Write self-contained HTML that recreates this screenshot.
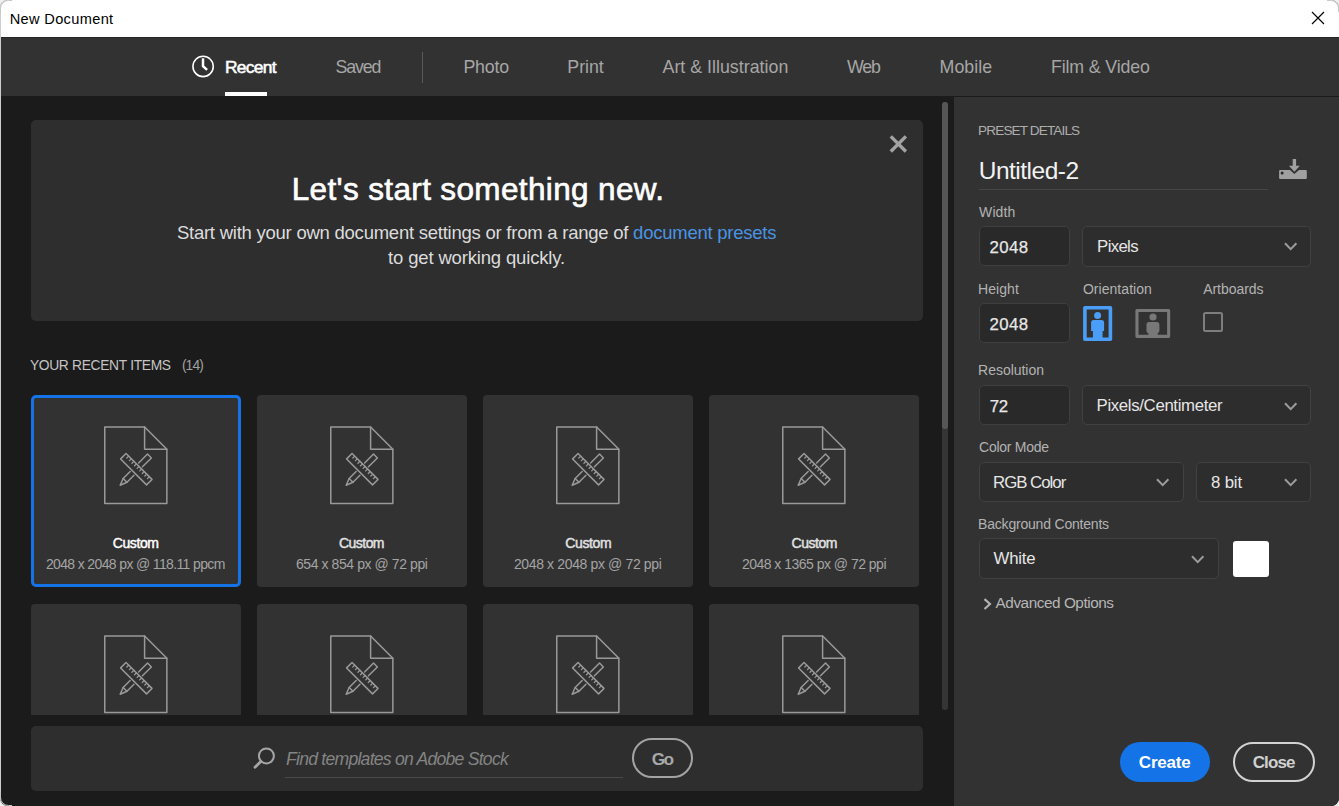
<!DOCTYPE html>
<html lang="en">
<head>
<meta charset="utf-8">
<title>New Document</title>
<style>
*{box-sizing:border-box;margin:0;padding:0}
html,body{width:1339px;height:806px;overflow:hidden;background:#f0f0f0;font-family:"Liberation Sans",sans-serif}
.a{position:absolute}
.tx{position:absolute;white-space:nowrap}
#win{position:absolute;left:0;top:0;width:1339px;height:806px;border-radius:8px;overflow:hidden;background:#1b1b1b}
#title{position:absolute;left:0;top:0;width:1339px;height:37px;background:#fff}
#tabs{position:absolute;left:0;top:37px;width:1339px;height:59px;background:#323232}
#rightbg{position:absolute;left:954px;top:97px;width:385px;height:709px;background:#323232}
#clip{position:absolute;left:0;top:97px;width:940px;height:618px;overflow:hidden}
.card{position:absolute;width:210px;height:192px;background:#323232;border-radius:4px}
.card.sel{border:3px solid #1473e6;border-radius:5px}
.ic{position:absolute;left:73px;top:31px}
.sel .ic{left:70px;top:28px}
.inp{position:absolute;background:#292929;border:1px solid #3f3f3f;border-radius:5px}
.dd{position:absolute;background:#2d2d2d;border:1px solid #414141;border-radius:5px}
#ttl{left:9.70px;top:10px;font-size:14.6px;line-height:18px;letter-spacing:0.336px;color:#000;}
#t_recent{left:224.97px;top:56px;font-size:17.4px;line-height:22px;letter-spacing:-0.704px;color:#fff;-webkit-text-stroke:0.55px #fff;}
#t_saved{left:335.40px;top:56px;font-size:17.8px;line-height:22px;letter-spacing:-1.082px;color:#a6a6a6;}
#t_photo{left:463.40px;top:56px;font-size:17.8px;line-height:22px;letter-spacing:-0.170px;color:#a6a6a6;}
#t_print{left:567.30px;top:56px;font-size:17.8px;line-height:22px;letter-spacing:-0.030px;color:#a6a6a6;}
#t_art{left:662.50px;top:56px;font-size:17.8px;line-height:22px;letter-spacing:0.017px;color:#a6a6a6;}
#t_web{left:847.10px;top:56px;font-size:17.8px;line-height:22px;letter-spacing:-1.275px;color:#a6a6a6;}
#t_mobile{left:939.60px;top:56px;font-size:17.8px;line-height:22px;letter-spacing:0.022px;color:#a6a6a6;}
#t_film{left:1050.90px;top:56px;font-size:17.8px;line-height:22px;letter-spacing:-0.126px;color:#a6a6a6;}
#h1{left:291.72px;top:170px;font-size:31.5px;line-height:38px;letter-spacing:0.360px;color:#fff;-webkit-text-stroke:0.65px #fff;}
#sub1{left:176.90px;top:221px;font-size:18.5px;line-height:23px;letter-spacing:-0.241px;color:#dcdcdc;}
#sub2{left:388.10px;top:246px;font-size:18.5px;line-height:23px;letter-spacing:-0.163px;color:#dcdcdc;}
#rec{left:29.90px;top:357px;font-size:13.8px;line-height:17px;letter-spacing:-0.313px;color:#c4c4c4;}
#rec14{left:181.90px;top:357px;font-size:13.8px;line-height:17px;letter-spacing:-0.880px;color:#a0a0a0;}
#c1n{left:112.72px;top:534px;font-size:14px;line-height:18px;letter-spacing:-0.404px;color:#fff;-webkit-text-stroke:0.45px #fff;}
#c1d{left:45.90px;top:555px;font-size:14px;line-height:18px;letter-spacing:-0.635px;color:#a4a4a4;}
#c2n{left:339.03px;top:534px;font-size:14px;line-height:18px;letter-spacing:-0.544px;color:#e2e2e2;-webkit-text-stroke:0.45px #e2e2e2;}
#c2d{left:295.90px;top:555px;font-size:14px;line-height:18px;letter-spacing:-0.415px;color:#a4a4a4;}
#c3n{left:565.33px;top:534px;font-size:14px;line-height:18px;letter-spacing:-0.384px;color:#e2e2e2;-webkit-text-stroke:0.45px #e2e2e2;}
#c3d{left:513.90px;top:555px;font-size:14px;line-height:18px;letter-spacing:-0.362px;color:#a4a4a4;}
#c4n{left:791.52px;top:534px;font-size:14px;line-height:18px;letter-spacing:-0.464px;color:#e2e2e2;-webkit-text-stroke:0.45px #e2e2e2;}
#c4d{left:741.90px;top:555px;font-size:14px;line-height:18px;letter-spacing:-0.512px;color:#a4a4a4;}
#ph{left:286.00px;top:748px;font-size:17.6px;line-height:22px;letter-spacing:-0.754px;color:#848484;font-style:italic;}
#go{left:651.80px;top:748px;font-size:17.3px;line-height:22px;letter-spacing:-1.642px;color:#a8a8a8;font-weight:bold;}
#pd{left:978.10px;top:122px;font-size:13.6px;line-height:17px;letter-spacing:-0.888px;color:#adadad;}
#unt{left:978.70px;top:156px;font-size:24.5px;line-height:29px;letter-spacing:-0.492px;color:#f2f2f2;}
#l_w{left:979.10px;top:203px;font-size:14px;line-height:18px;letter-spacing:0.075px;color:#b2b2b2;}
#v_w{left:989.42px;top:237px;font-size:16.8px;line-height:21px;letter-spacing:0.417px;color:#e8e8e8;-webkit-text-stroke:0.25px #e8e8e8;}
#d_px{left:1097.10px;top:236px;font-size:16.8px;line-height:21px;letter-spacing:-0.655px;color:#e6e6e6;}
#l_h{left:978.10px;top:280px;font-size:14px;line-height:18px;letter-spacing:0.044px;color:#b2b2b2;}
#l_o{left:1082.90px;top:280px;font-size:14px;line-height:18px;letter-spacing:0.050px;color:#b2b2b2;}
#l_a{left:1203.20px;top:280px;font-size:14px;line-height:18px;letter-spacing:-0.050px;color:#b2b2b2;}
#v_h{left:989.42px;top:314px;font-size:16.8px;line-height:21px;letter-spacing:0.417px;color:#e8e8e8;-webkit-text-stroke:0.25px #e8e8e8;}
#l_r{left:978.10px;top:361px;font-size:14px;line-height:18px;letter-spacing:-0.029px;color:#b2b2b2;}
#v_r{left:989.73px;top:396px;font-size:16.8px;line-height:21px;letter-spacing:-0.283px;color:#e8e8e8;-webkit-text-stroke:0.25px #e8e8e8;}
#d_pc{left:1096.60px;top:395px;font-size:16.8px;line-height:21px;letter-spacing:-0.344px;color:#e6e6e6;}
#l_c{left:979.10px;top:438px;font-size:14px;line-height:18px;letter-spacing:-0.275px;color:#b2b2b2;}
#d_rgb{left:993.00px;top:472px;font-size:16.8px;line-height:21px;letter-spacing:-0.980px;color:#e6e6e6;}
#d_8{left:1211.00px;top:472px;font-size:16.8px;line-height:21px;letter-spacing:-0.164px;color:#e6e6e6;}
#l_b{left:978.10px;top:515px;font-size:14px;line-height:18px;letter-spacing:-0.202px;color:#b2b2b2;}
#d_wh{left:993.50px;top:548px;font-size:16.8px;line-height:21px;letter-spacing:-0.191px;color:#e6e6e6;}
#adv{left:995.60px;top:593px;font-size:15.3px;line-height:19px;letter-spacing:-0.444px;color:#b6b6b6;}
#create{left:1138.80px;top:752px;font-size:17px;line-height:21px;letter-spacing:-0.193px;color:#fff;font-weight:bold;}
#close{left:1252.70px;top:752px;font-size:17px;line-height:21px;letter-spacing:-0.860px;color:#d0d0d0;font-weight:bold;}
</style>
</head>
<body>
<svg width="0" height="0" style="position:absolute">
<defs>
<g id="docic" fill="none" stroke="#999" stroke-width="1.5" stroke-linejoin="round" stroke-linecap="round">
<path d="M0.75 1.05H40.6L62.85 23.3V77.45H0.75Z"/>
<path d="M40.6 1.05V23.3H62.85"/>
<g transform="translate(32.3 43.15) rotate(45)">
<rect x="-18.35" y="-3.85" width="36.7" height="7.7"/>
<path d="M-14.55 -3.85v2.7M-10.91 -3.85v2.7M-7.27 -3.85v2.7M-3.63 -3.85v2.7M0 -3.85v2.7M3.64 -3.85v2.7M7.28 -3.85v2.7M10.92 -3.85v2.7M14.56 -3.85v2.7" stroke-width="1.3"/>
</g>
<g transform="translate(32.3 43.15) rotate(-45)">
<path d="M6 -2.7H18.6V2.7H6"/>
<path d="M-6 -2.7H-15.9L-22.8 0L-15.9 2.7H-6"/>
<path d="M-15.9 -2.7V2.7"/>
</g>
</g>
<path id="chev" d="M1 1.2l5.7 5.9l5.700-5.900" fill="none" stroke="#9c9c9c" stroke-width="2"/>
</defs>
</svg>
<div id="win">
<div id="title"></div>
<svg class="a" style="left:1311px;top:11px" width="14" height="14" viewBox="0 0 14 14"><path d="M1 1L13 13M13 1L1 13" stroke="#000" stroke-width="1.15" fill="none"/></svg>
<div id="tabs"></div>
<div class="a" style="left:0;top:37px;width:1339px;height:1px;background:#272727"></div>
<svg class="a" style="left:191px;top:54px" width="25" height="25" viewBox="0 0 25 25"><circle cx="12.100" cy="12.450" r="10.150" fill="none" stroke="#fff" stroke-width="1.550"/><path d="M12 4.200V12.300L16.100 15.900" fill="none" stroke="#fff" stroke-width="2.500"/></svg>
<div class="a" style="left:225px;top:92px;width:42px;height:4px;background:#fff"></div>
<div class="a" style="left:422px;top:52px;width:1px;height:31px;background:#5a5a5a"></div>
<div id="rightbg"></div>

<!-- banner -->
<div class="a" style="left:31px;top:120px;width:892px;height:201px;background:#2e2e2e;border-radius:5px"></div>
<svg class="a" style="left:889px;top:135px" width="19" height="18" viewBox="0 0 19 18"><path d="M1.800 1.400L16.900 16.500M16.900 1.400L1.800 16.500" stroke="#a3a3a3" stroke-width="3.400" fill="none"/></svg>

<div id="clip">
<div class="card sel" style="left:31px;top:298px"><svg class="ic" width="64" height="79"><use href="#docic"/></svg></div>
<div class="card" style="left:257px;top:298px"><svg class="ic" width="64" height="79"><use href="#docic"/></svg></div>
<div class="card" style="left:483px;top:298px"><svg class="ic" width="64" height="79"><use href="#docic"/></svg></div>
<div class="card" style="left:709px;top:298px"><svg class="ic" width="64" height="79"><use href="#docic"/></svg></div>
<div class="card" style="left:31px;top:507px"><svg class="ic" width="64" height="79"><use href="#docic"/></svg></div>
<div class="card" style="left:257px;top:507px"><svg class="ic" width="64" height="79"><use href="#docic"/></svg></div>
<div class="card" style="left:483px;top:507px"><svg class="ic" width="64" height="79"><use href="#docic"/></svg></div>
<div class="card" style="left:709px;top:507px"><svg class="ic" width="64" height="79"><use href="#docic"/></svg></div>
</div>
<!-- scrollbar -->
<div class="a" style="left:942px;top:102px;width:6px;height:608px;background:#353535;border-radius:3px"></div>
<div class="a" style="left:942px;top:102px;width:6px;height:327px;background:#565656;border-radius:3px"></div>
<!-- search -->
<div class="a" style="left:31px;top:726px;width:892px;height:65px;background:#2e2e2e;border-radius:5px"></div>
<svg class="a" style="left:252px;top:746px" width="26" height="24" viewBox="0 0 26 24"><circle cx="14.400" cy="9.900" r="7.500" fill="none" stroke="#a6a6a6" stroke-width="2"/><path d="M8.800 15.500L3 21.200" stroke="#a6a6a6" stroke-width="2.800" stroke-linecap="round"/></svg>
<div class="a" style="left:285px;top:777px;width:338px;height:1px;background:#494949"></div>
<div class="a" style="left:632px;top:738px;width:61px;height:40px;border:2px solid #a3a3a3;border-radius:20px"></div>

<!-- right panel -->
<div class="a" style="left:979px;top:189px;width:289px;height:1px;background:#464646"></div>
<svg class="a" style="left:1279px;top:158px" width="29" height="22" viewBox="0 0 29 22"><path d="M13.700 1H17.100V7.700H20.800L15.400 13.700L9.900 7.700H13.700Z" fill="#a0a0a0"/><path d="M0.100 12.900a1 1 0 0 1 1-1H10.900L15.400 15.900L20 11.900H26.800a1 1 0 0 1 1 1V20a1 1 0 0 1-1 1H1.100a1 1 0 0 1-1-1Z" fill="#a0a0a0"/><circle cx="3.100" cy="14.900" r="1.500" fill="#262626"/></svg>
<div class="inp" style="left:979px;top:226px;width:91px;height:40px"></div>
<div class="dd" style="left:1082px;top:226px;width:229px;height:41px"></div>
<svg class="a" style="left:1283.800px;top:242.100px" width="14" height="9" viewBox="0 0 14 9"><use href="#chev"/></svg>
<div class="inp" style="left:979px;top:303px;width:91px;height:40px"></div>
<svg class="a" style="left:1083px;top:306px" width="30" height="36" viewBox="0 0 30 36"><rect x="1.900" y="1.800" width="25.500" height="31.500" fill="none" stroke="#4a9ef7" stroke-width="3.600" stroke-linejoin="round"/><circle cx="14.600" cy="9.500" r="3.500" fill="#4a9ef7"/><path d="M8.100 25V16.500a2.500 2.500 0 0 1 2.500-2.500h8a2.500 2.500 0 0 1 2.500 2.500V25h-1.500V33h-9.700V25z" fill="#4a9ef7"/></svg>
<svg class="a" style="left:1134.500px;top:309px" width="37" height="30" viewBox="0 0 37 30"><rect x="1.950" y="1.550" width="31.700" height="25.800" fill="none" stroke="#787878" stroke-width="3.100" stroke-linejoin="round"/><circle cx="18" cy="8" r="3.600" fill="#787878"/><path d="M11.500 21.900V15.400a2.500 2.500 0 0 1 2.500-2.500h7.900a2.500 2.500 0 0 1 2.500 2.500V21.900a2 2 0 0 1-1.700 2V27h-9.400V23.900a2 2 0 0 1-1.800-2z" fill="#787878"/></svg>
<div class="a" style="left:1203px;top:312px;width:20px;height:20px;border:2px solid #7e7e7e;border-radius:2.500px"></div>
<div class="inp" style="left:979px;top:385px;width:91px;height:40px"></div>
<div class="dd" style="left:1082px;top:385px;width:229px;height:40px"></div>
<svg class="a" style="left:1283.800px;top:401.600px" width="14" height="9" viewBox="0 0 14 9"><use href="#chev"/></svg>
<div class="dd" style="left:979px;top:462px;width:205px;height:40px"></div>
<svg class="a" style="left:1156.300px;top:477.500px" width="14" height="9" viewBox="0 0 14 9"><use href="#chev"/></svg>
<div class="dd" style="left:1196px;top:462px;width:115px;height:40px"></div>
<svg class="a" style="left:1283.800px;top:477.500px" width="14" height="9" viewBox="0 0 14 9"><use href="#chev"/></svg>
<div class="dd" style="left:979px;top:538px;width:240px;height:41px"></div>
<svg class="a" style="left:1191px;top:554.700px" width="14" height="9" viewBox="0 0 14 9"><use href="#chev"/></svg>
<div class="a" style="left:1232.500px;top:540.500px;width:36px;height:36px;background:#fff;border-radius:3px"></div>
<svg class="a" style="left:982px;top:597px" width="11" height="15" viewBox="0 0 11 15"><path d="M2.500 2.100L8 7L2.500 12.100" fill="none" stroke="#b4b4b4" stroke-width="2.100"/></svg>
<div class="a" style="left:1120px;top:742px;width:90px;height:40px;border-radius:20px;background:#1473e6"></div>
<div class="a" style="left:1233px;top:742px;width:82px;height:40px;border-radius:20px;border:2px solid #d2d2d2"></div>

<div class="tx" id="ttl">New Document</div>
<div class="tx" id="t_recent">Recent</div>
<div class="tx" id="t_saved">Saved</div>
<div class="tx" id="t_photo">Photo</div>
<div class="tx" id="t_print">Print</div>
<div class="tx" id="t_art">Art &amp; Illustration</div>
<div class="tx" id="t_web">Web</div>
<div class="tx" id="t_mobile">Mobile</div>
<div class="tx" id="t_film">Film &amp; Video</div>
<div class="tx" id="h1">Let's start something new.</div>
<div class="tx" id="sub1">Start with your own document settings or from a range of <span style="color:#4a94e2">document presets</span></div>
<div class="tx" id="sub2">to get working quickly.</div>
<div class="tx" id="rec">YOUR RECENT ITEMS</div>
<div class="tx" id="rec14">(14)</div>
<div class="tx" id="c1n">Custom</div>
<div class="tx" id="c1d">2048 x 2048 px @ 118.11 ppcm</div>
<div class="tx" id="c2n">Custom</div>
<div class="tx" id="c2d">654 x 854 px @ 72 ppi</div>
<div class="tx" id="c3n">Custom</div>
<div class="tx" id="c3d">2048 x 2048 px @ 72 ppi</div>
<div class="tx" id="c4n">Custom</div>
<div class="tx" id="c4d">2048 x 1365 px @ 72 ppi</div>
<div class="tx" id="ph">Find templates on Adobe Stock</div>
<div class="tx" id="go">Go</div>
<div class="tx" id="pd">PRESET DETAILS</div>
<div class="tx" id="unt">Untitled-2</div>
<div class="tx" id="l_w">Width</div>
<div class="tx" id="v_w">2048</div>
<div class="tx" id="d_px">Pixels</div>
<div class="tx" id="l_h">Height</div>
<div class="tx" id="l_o">Orientation</div>
<div class="tx" id="l_a">Artboards</div>
<div class="tx" id="v_h">2048</div>
<div class="tx" id="l_r">Resolution</div>
<div class="tx" id="v_r">72</div>
<div class="tx" id="d_pc">Pixels/Centimeter</div>
<div class="tx" id="l_c">Color Mode</div>
<div class="tx" id="d_rgb">RGB Color</div>
<div class="tx" id="d_8">8 bit</div>
<div class="tx" id="l_b">Background Contents</div>
<div class="tx" id="d_wh">White</div>
<div class="tx" id="adv">Advanced Options</div>
<div class="tx" id="create">Create</div>
<div class="tx" id="close">Close</div>
<div class="a" style="left:0;top:0;width:1px;height:806px;background:#cdcdcd"></div>
</div>
<svg class="a" style="left:0;top:0" width="1339" height="806" viewBox="0 0 1339 806"><path d="M0.500 14V8.500A8 8 0 0 1 8.500 0.500H12M1327 0.500H1330.500A8 8 0 0 1 1338.500 8.500V12M0.500 792V797.500A8 8 0 0 0 8.500 805.500H12" fill="none" stroke="#c6c6c6" stroke-width="1"/></svg>
</body>
</html>
